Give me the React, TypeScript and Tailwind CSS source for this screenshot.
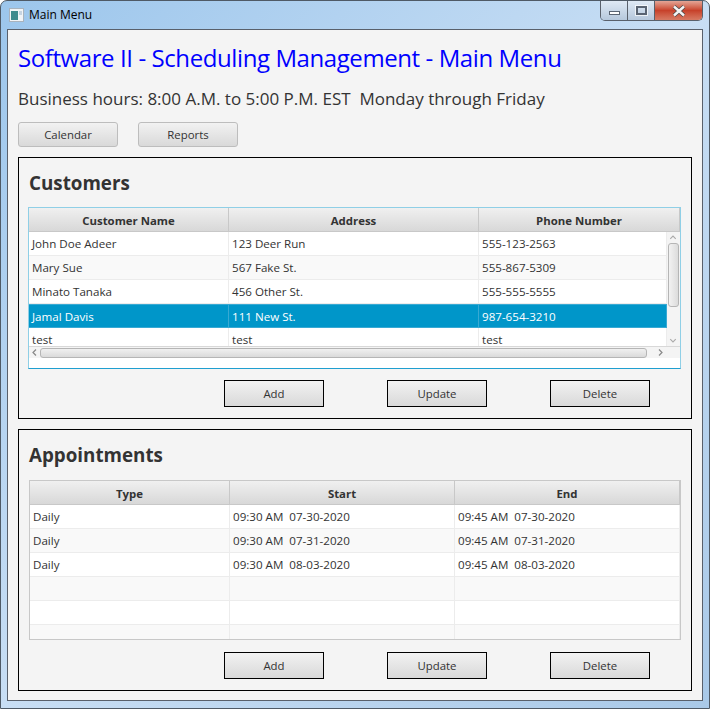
const font = "font-['Segoe_UI','Open_Sans','Noto_Sans',sans-serif]";

interface Column {
  title: string;
  width: string;
}

const customerColumns: Column[] = [
  { title: "Customer Name", width: "w-[200px]" },
  { title: "Address", width: "w-[250px]" },
  { title: "Phone Number", width: "flex-1" },
];

const customerRows = [
  ["John Doe Adeer", "123 Deer Run", "555-123-2563"],
  ["Mary Sue", "567 Fake St.", "555-867-5309"],
  ["Minato Tanaka", "456 Other St.", "555-555-5555"],
  ["Jamal Davis", "111 New St.", "987-654-3210"],
  ["test", "test", "test"],
];

const appointmentColumns: Column[] = [
  { title: "Type", width: "w-[200px]" },
  { title: "Start", width: "w-[225px]" },
  { title: "End", width: "flex-1" },
];

const appointmentRows = [
  ["Daily", "09:30 AM  07-30-2020", "09:45 AM  07-30-2020"],
  ["Daily", "09:30 AM  07-31-2020", "09:45 AM  07-31-2020"],
  ["Daily", "09:30 AM  08-03-2020", "09:45 AM  08-03-2020"],
  ["", "", ""],
  ["", "", ""],
  ["", "", ""],
];

function Header({ columns }: { columns: Column[] }) {
  return (
    <div className="flex h-6 shrink-0 bg-gradient-to-b from-[#f0f0f0] to-[#d8d8d8] border-b border-[#c8c8c8]">
      {columns.map((c) => (
        <div
          key={c.title}
          className={`${c.width} flex items-center justify-center pt-[2px] border-r border-[#c8c8c8] text-[11.4px] font-bold text-[#333]`}
        >
          {c.title}
        </div>
      ))}
    </div>
  );
}

function Row({ cells, columns, index, selected }: { cells: string[]; columns: Column[]; index: number; selected?: boolean }) {
  const bg = selected
    ? "bg-[#0096c9] border-y border-[#38a9d3] text-white"
    : index % 2
      ? "bg-[#f9f9f9] border-b border-[#ececec] text-[#333]"
      : "bg-white border-b border-[#ececec] text-[#333]";
  return (
    <div className={`flex h-6 shrink-0 ${bg}`}>
      {columns.map((c, i) => (
        <div
          key={c.title}
          className={`${c.width} flex items-center whitespace-pre pl-[3px] pt-px border-r ${selected ? "border-[#38a9d3]" : "border-[#ececec]"} text-[11.6px]`}
        >
          {cells[i]}
        </div>
      ))}
    </div>
  );
}

function Button({ label, flat }: { label: string; flat?: boolean }) {
  return (
    <button
      className={`w-[100px] bg-gradient-to-b from-[#f2f2f2] to-[#d9d9d9] text-[11.4px] text-[#333] ${
        flat ? "h-[25px] rounded-[3px] border border-[#bdbdbd]" : "h-[27px] border border-black"
      }`}
    >
      {label}
    </button>
  );
}

function ActionRow({ top }: { top: string }) {
  return (
    <div className={`flex gap-[63px] pl-[196px] ${top}`}>
      <Button label="Add" />
      <Button label="Update" />
      <Button label="Delete" />
    </div>
  );
}

function ScrollV() {
  return (
    <div className="w-[13px] shrink-0 bg-[#f4f4f4] flex flex-col items-end pr-px">
      <svg className="w-[12px] h-[11px] shrink-0" viewBox="0 0 13 11" fill="none" stroke="#aaa" strokeWidth="1.2">
        <path d="M3.5 7 6.5 4 9.5 7" />
      </svg>
      <div className="w-[11px] h-[64px] rounded-[3px] border border-[#b5b5b5] bg-gradient-to-r from-[#f2f2f2] to-[#dcdcdc]" />
      <div className="flex-1" />
      <svg className="w-[12px] h-[11px] shrink-0" viewBox="0 0 13 11" fill="none" stroke="#aaa" strokeWidth="1.2">
        <path d="M3.5 4 6.5 7 9.5 4" />
      </svg>
    </div>
  );
}

function ScrollH() {
  return (
    <div className="h-3 shrink-0 flex items-center bg-[#f4f4f4] border-t border-[#d8d8d8]">
      <svg className="w-[11px] h-[11px] shrink-0" viewBox="0 0 11 11" fill="none" stroke="#888" strokeWidth="1.2">
        <path d="M7 2.5 4 5.5 7 8.5" />
      </svg>
      <div className="w-[607px] h-[10px] rounded-[3px] border border-[#b5b5b5] bg-gradient-to-b from-[#f0f0f0] to-[#dadada]" />
      <div className="flex-1" />
      <svg className="w-[11px] h-[11px] shrink-0 mr-[14px]" viewBox="0 0 11 11" fill="none" stroke="#888" strokeWidth="1.2">
        <path d="M4 2.5 7 5.5 4 8.5" />
      </svg>
    </div>
  );
}

function Panel({ title, children }: { title: string; children: React.ReactNode }) {
  return (
    <div className="w-[674px] h-[262px] border border-black pl-[9px] pt-[12px]">
      <h2 className="h-[26px] pl-px flex items-center text-[18.8px] font-bold leading-none text-[#333]">{title}</h2>
      {children}
    </div>
  );
}

function WindowButtons() {
  return (
    <div className="flex h-5 ml-auto mr-[6px] rounded-b-[5px] overflow-hidden border border-t-0 border-[#59606b]">
      <div className="w-[27px] flex items-center justify-center border-r border-[#59606b] bg-gradient-to-b from-[#dfe9f4] to-[#b6c8dc]">
        <div className="w-[11px] h-[4px] mt-[4px] bg-white border border-[#5a6472]" />
      </div>
      <div className="w-[27px] flex items-center justify-center border-r border-[#59606b] bg-gradient-to-b from-[#dfe9f4] to-[#b6c8dc]">
        <div className="w-[11px] h-[9px] border-2 border-[#5a6472] outline outline-1 outline-white/70" />
      </div>
      <div className="w-[47px] flex items-center justify-center bg-gradient-to-b from-[#e3a596] via-[#c7412a] to-[#d77a63]">
        <svg className="w-[14px] h-[12px]" viewBox="0 0 14 12">
          <path d="M2 1.5 12 10.5M12 1.5 2 10.5" stroke="#4b4b4b" strokeWidth="4" />
          <path d="M2 1.5 12 10.5M12 1.5 2 10.5" stroke="#f4f4f4" strokeWidth="2.4" />
        </svg>
      </div>
    </div>
  );
}

export default function App() {
  return (
    <div className={`${font} w-[710px] h-[709px] overflow-hidden rounded-t-[7px] border border-[#4f5a66] bg-gradient-to-br from-[#9cc6ec] via-[#c8def4] to-[#a9c9e8]`}>
      <div className="flex h-[28px] pl-[8px]">
        <div className="flex items-center h-[28px] pb-[1px]">
          <svg className="w-[15px] h-[14px] mr-[5px]" viewBox="0 0 15 14">
            <rect x="0.5" y="0.5" width="14" height="13" fill="#f1f4f7" stroke="#a9b3bd" />
            <rect x="2" y="3" width="7" height="9" fill="#3e8a8e" />
            <rect x="10" y="3" width="3" height="4" fill="#c6d4e2" />
          </svg>
          <span className="text-[12px] text-black">Main Menu</span>
        </div>
        <WindowButtons />
      </div>
      <div className="ml-[6px] w-[696px] h-[672px] border border-[#59606b] bg-[#f4f4f4] pl-[10px] pt-[10px]">
        <h1 className="h-[36px] flex items-center text-[24px] tracking-[-0.41px] leading-none text-[#0000ff]">
          Software II - Scheduling Management - Main Menu
        </h1>
        <p className="h-[24px] mt-[10px] flex items-center whitespace-pre text-[17px] leading-none text-[#333]">
          Business hours: 8:00 A.M. to 5:00 P.M. EST  Monday through Friday
        </p>
        <div className="flex gap-5 mt-[12px]">
          <Button label="Calendar" flat />
          <Button label="Reports" flat />
        </div>
        <div className="flex flex-col gap-[10px] mt-[10px]">
          <Panel title="Customers">
            <div className="w-[653px] h-[162px] mt-[11px] border border-[#8fcfe6] border-b-[#1f9fd0] bg-white flex flex-col">
              <Header columns={customerColumns} />
              <div className="flex h-[114px] overflow-hidden">
                <div className="w-[638px] flex flex-col overflow-hidden">
                  {customerRows.map((r, i) => (
                    <Row key={i} cells={r} columns={customerColumns} index={i} selected={i === 3} />
                  ))}
                </div>
                <ScrollV />
              </div>
              <ScrollH />
            </div>
            <ActionRow top="mt-[11px]" />
          </Panel>
          <Panel title="Appointments">
            <div className="w-[652px] h-[160px] mt-[12px] ml-px border border-[#c8c8c8] bg-white flex flex-col overflow-hidden">
              <Header columns={appointmentColumns} />
              {appointmentRows.map((r, i) => (
                <Row key={i} cells={r} columns={appointmentColumns} index={i} />
              ))}
            </div>
            <ActionRow top="mt-[12px]" />
          </Panel>
        </div>
      </div>
    </div>
  );
}
